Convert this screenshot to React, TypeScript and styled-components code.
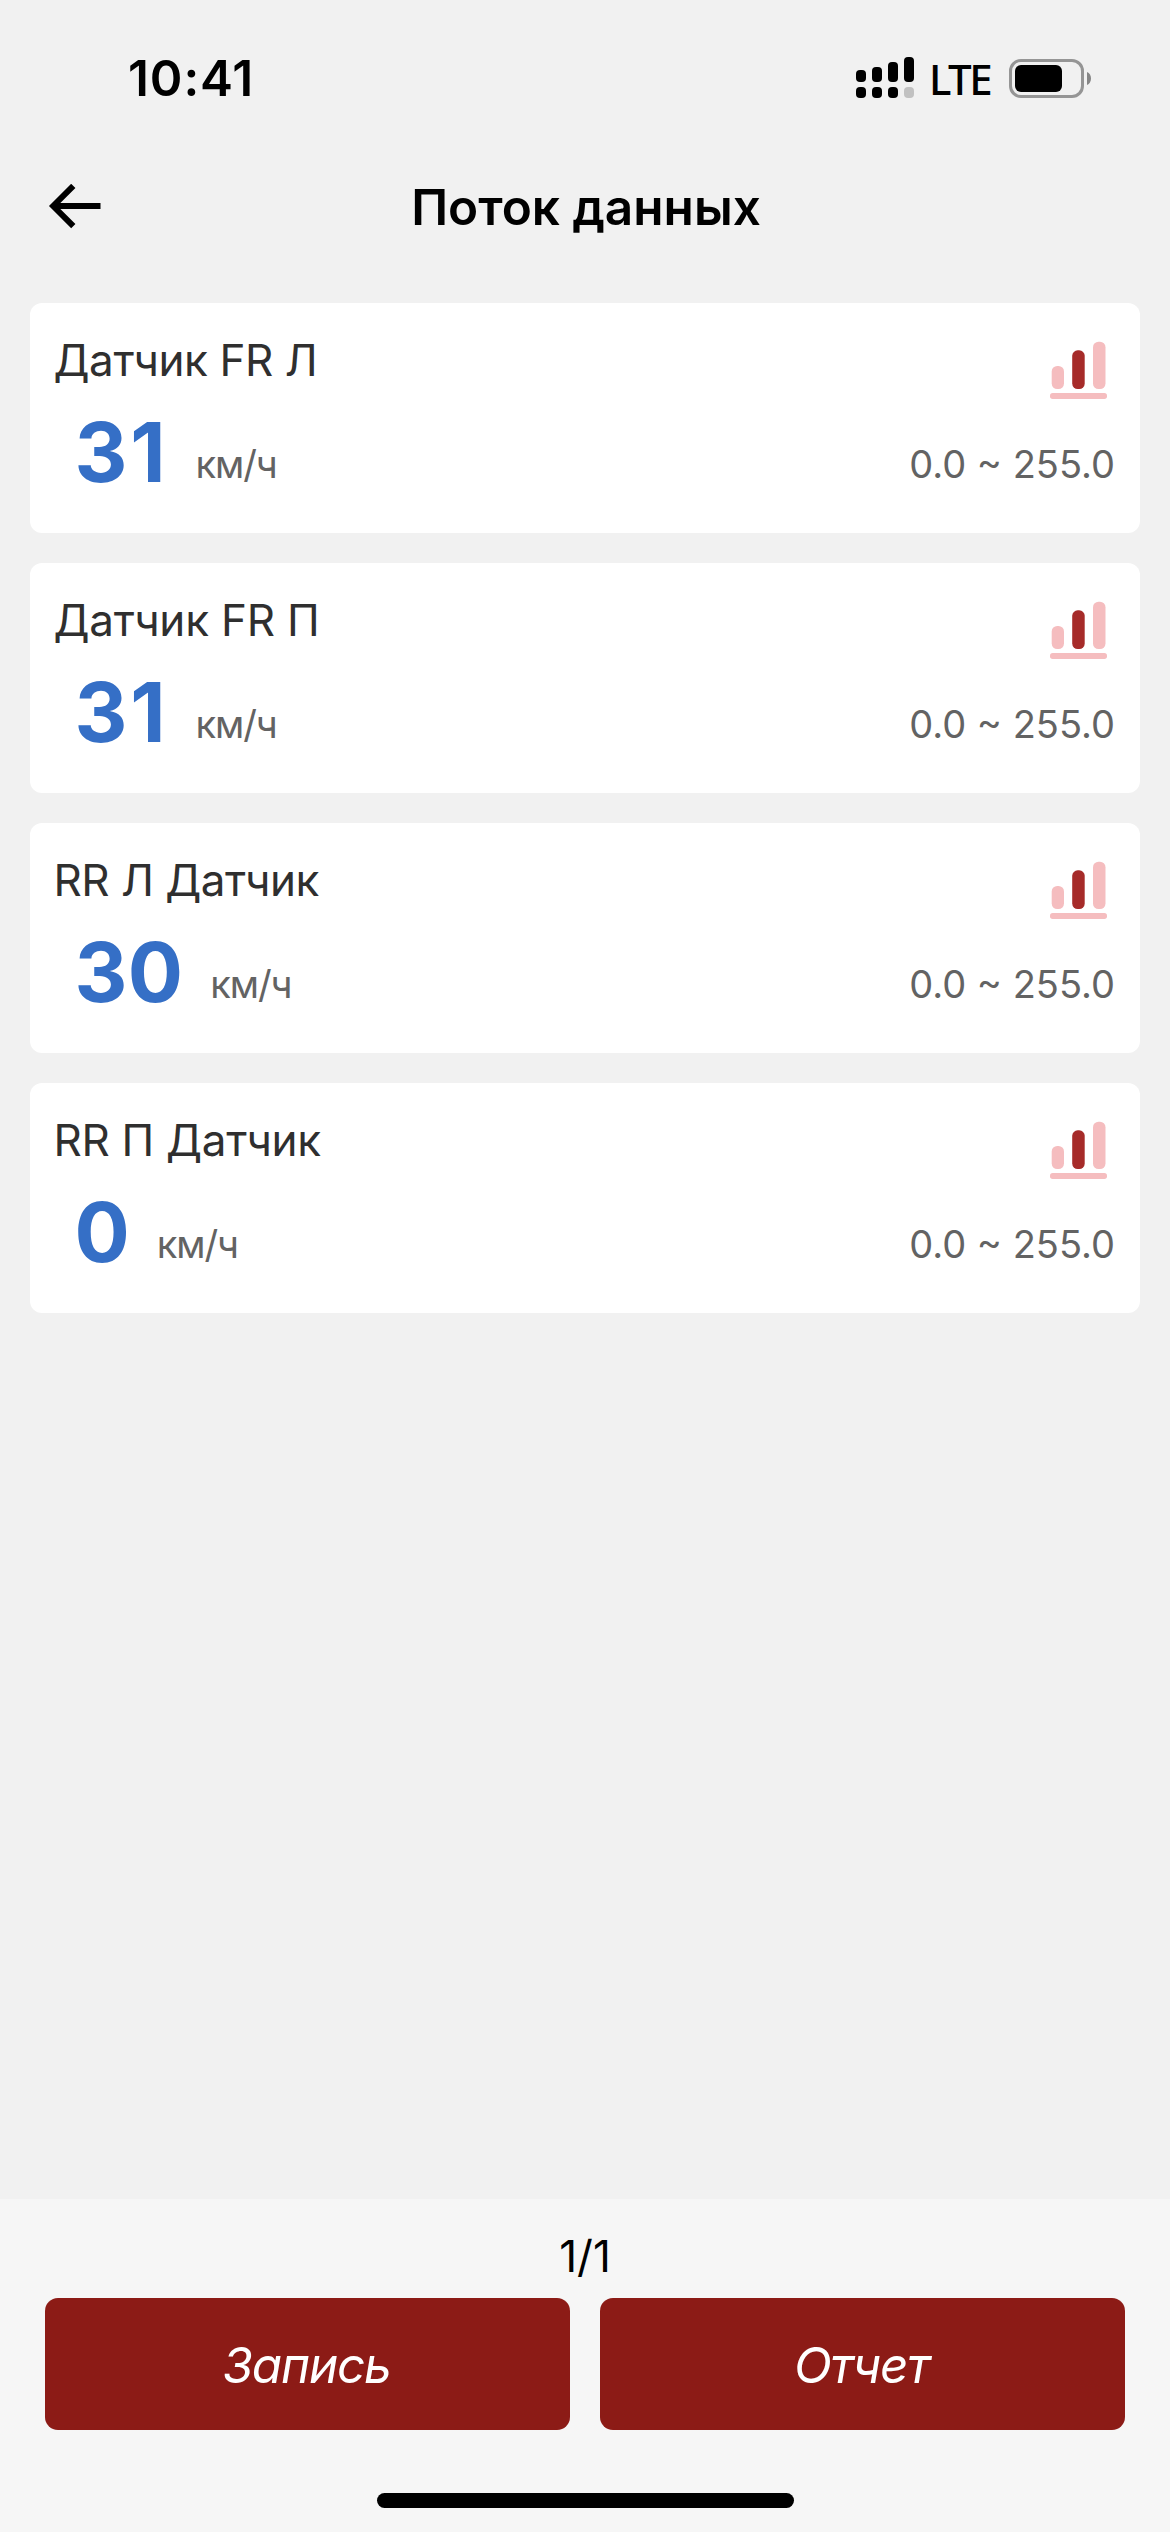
import React from "react";
import styled, { createGlobalStyle } from "styled-components";

const GlobalStyle = createGlobalStyle`
  * { box-sizing: border-box; }
  body {
    margin: 0;
    background: #f1f1f1;
    font-family: Inter, "Noto Sans", sans-serif;
  }
`;

const Screen = styled.div`
  display: flex;
  flex-direction: column;
  width: 1170px;
  height: 2532px;
  background: #f1f1f1;
  color: #000;
`;

const StatusBar = styled.div`
  display: flex;
  align-items: center;
  justify-content: space-between;
  height: 156px;
  padding: 0 79px 0 128px;
`;

const Clock = styled.time`
  font-size: 49.5px;
  font-weight: 600;
  line-height: 60px;
  letter-spacing: 0.9px;
`;

const StatusIcons = styled.div`
  display: flex;
  align-items: center;
`;

const Network = styled.span`
  width: 80px;
  margin-left: 15px;
  font-family: "Noto Sans", sans-serif;
  font-size: 42px;
  font-weight: 500;
  line-height: 57px;
  letter-spacing: -2.5px;
`;

const Header = styled.header`
  display: grid;
  grid-template-columns: 54px 1fr 54px;
  align-items: center;
  height: 102px;
  padding: 0 48px;
`;

const BackButton = styled.button`
  display: flex;
  padding: 0;
  border: 0;
  background: none;
`;

const Title = styled.h1`
  margin: 0;
  padding-left: 2px;
  font-size: 49.5px;
  font-weight: 600;
  line-height: 60px;
  text-align: center;
`;

const CardList = styled.main`
  display: flex;
  flex: 1;
  flex-direction: column;
  gap: 30px;
  padding: 45px 30px 0;
`;

const Card = styled.section`
  height: 230px;
  padding: 25px 25px 0 23.5px;
  border-radius: 12px;
  background: #fff;
`;

const CardHead = styled.div`
  display: flex;
  align-items: flex-start;
  justify-content: space-between;
  height: 84px;
  padding-right: 7px;
`;

const SensorName = styled.h2<{ $tracking: number }>`
  margin: 0;
  color: #2f2f2f;
  font-size: 44px;
  font-weight: 400;
  line-height: 64px;
  letter-spacing: ${(p) => p.$tracking}px;
`;

const ChartButton = styled.button`
  display: flex;
  padding: 13px 0 0;
  border: 0;
  background: none;
`;

const Reading = styled.div`
  display: flex;
  align-items: flex-start;
  padding-left: 21px;
`;

const Value = styled.strong<{ $tracking: number }>`
  color: #356fc6;
  font-size: 82px;
  font-weight: 700;
  line-height: 81px;
  letter-spacing: ${(p) => p.$tracking}px;
`;

const Unit = styled.span`
  margin: 29px 0 0 27px;
  color: #636363;
  font-size: 38px;
  line-height: 46px;
  letter-spacing: -1.1px;
`;

const Range = styled.span`
  margin: 29px 0 0 auto;
  color: #636363;
  font-size: 38px;
  line-height: 46px;
`;

const Footer = styled.footer`
  display: flex;
  flex-direction: column;
  align-items: center;
  height: 333px;
  padding: 27px 45px 0;
  background: #f6f6f6;
`;

const PageCount = styled.div`
  margin-bottom: 12px;
  font-size: 44px;
  line-height: 60px;
`;

const Actions = styled.div`
  display: grid;
  grid-template-columns: 1fr 1fr;
  gap: 30px;
  width: 100%;
`;

const ActionButton = styled.button`
  height: 132px;
  padding: 2px 2px 0 0;
  border: 0;
  border-radius: 13px;
  background: #8c1b16;
  color: #fff;
  font-family: inherit;
  font-size: 49.5px;
  font-style: italic;
  line-height: 60px;
  letter-spacing: -1.2px;
`;

const HomeIndicator = styled.div`
  width: 417px;
  height: 15px;
  margin-top: 63px;
  border-radius: 8px;
  background: #000;
`;

const SignalIcon = () => (
  <svg width="58" height="42" viewBox="0 0 58 42">
    <rect x="0" y="13" width="10" height="12" rx="4" />
    <rect x="16" y="10" width="10" height="15" rx="4" />
    <rect x="32" y="5" width="10" height="20" rx="4" />
    <rect x="48" y="0" width="10" height="25" rx="4" />
    <rect x="0" y="30" width="10" height="11" rx="4" />
    <rect x="16" y="30" width="10" height="11" rx="4" />
    <rect x="32" y="30" width="10" height="11" rx="4" />
    <rect x="48" y="30" width="10" height="11" rx="4" fill="#c1c1c1" />
  </svg>
);

const BatteryIcon = () => (
  <svg width="82" height="39" viewBox="0 0 82 39">
    <rect x="1.5" y="1.5" width="72" height="36" rx="10.5" fill="none" stroke="#959595" strokeWidth="3" />
    <rect x="6" y="6" width="47" height="27" rx="6" />
    <path d="M78 13c2.6 1 4 3.700 4 6.500s-1.400 5.500-4 6.500z" fill="#868686" />
  </svg>
);

const BackArrow = () => (
  <svg width="54" height="46" viewBox="0 0 54 46" fill="none" stroke="#000" strokeWidth="6">
    <path d="M25.300 1.900 5.200 22l20.100 20.100M5.500 22h47" />
  </svg>
);

const ChartIcon = () => (
  <svg width="58" height="58" viewBox="0 0 58 58" fill="#f5bdbf">
    <rect x="1.700" y="25" width="12.300" height="23" rx="5.500" />
    <rect x="22.200" y="9.300" width="12.500" height="38.700" rx="5.500" fill="#a62b29" />
    <rect x="43" y="0.700" width="12.500" height="47.300" rx="5.500" />
    <rect x="0" y="52" width="57" height="6" rx="2.700" />
  </svg>
);

const sensors = [
  { name: "Датчик FR Л", nameTracking: -0.43, value: "31", valueTracking: 2.9 },
  { name: "Датчик FR П", nameTracking: -0.2, value: "31", valueTracking: 2.9 },
  { name: "RR Л Датчик", nameTracking: -0.5, value: "30", valueTracking: 0.3 },
  { name: "RR П Датчик", nameTracking: -0.3, value: "0", valueTracking: 0 },
];

export default function App() {
  return (
    <Screen>
      <GlobalStyle />
      <StatusBar>
        <Clock>10:41</Clock>
        <StatusIcons>
          <SignalIcon />
          <Network>LTE</Network>
          <BatteryIcon />
        </StatusIcons>
      </StatusBar>
      <Header>
        <BackButton aria-label="Назад">
          <BackArrow />
        </BackButton>
        <Title>Поток данных</Title>
      </Header>
      <CardList>
        {sensors.map((sensor) => (
          <Card key={sensor.name}>
            <CardHead>
              <SensorName $tracking={sensor.nameTracking}>{sensor.name}</SensorName>
              <ChartButton aria-label="График">
                <ChartIcon />
              </ChartButton>
            </CardHead>
            <Reading>
              <Value $tracking={sensor.valueTracking}>{sensor.value}</Value>
              <Unit>км/ч</Unit>
              <Range>0.0 ~ 255.0</Range>
            </Reading>
          </Card>
        ))}
      </CardList>
      <Footer>
        <PageCount>1/1</PageCount>
        <Actions>
          <ActionButton>Запись</ActionButton>
          <ActionButton>Отчет</ActionButton>
        </Actions>
        <HomeIndicator />
      </Footer>
    </Screen>
  );
}
